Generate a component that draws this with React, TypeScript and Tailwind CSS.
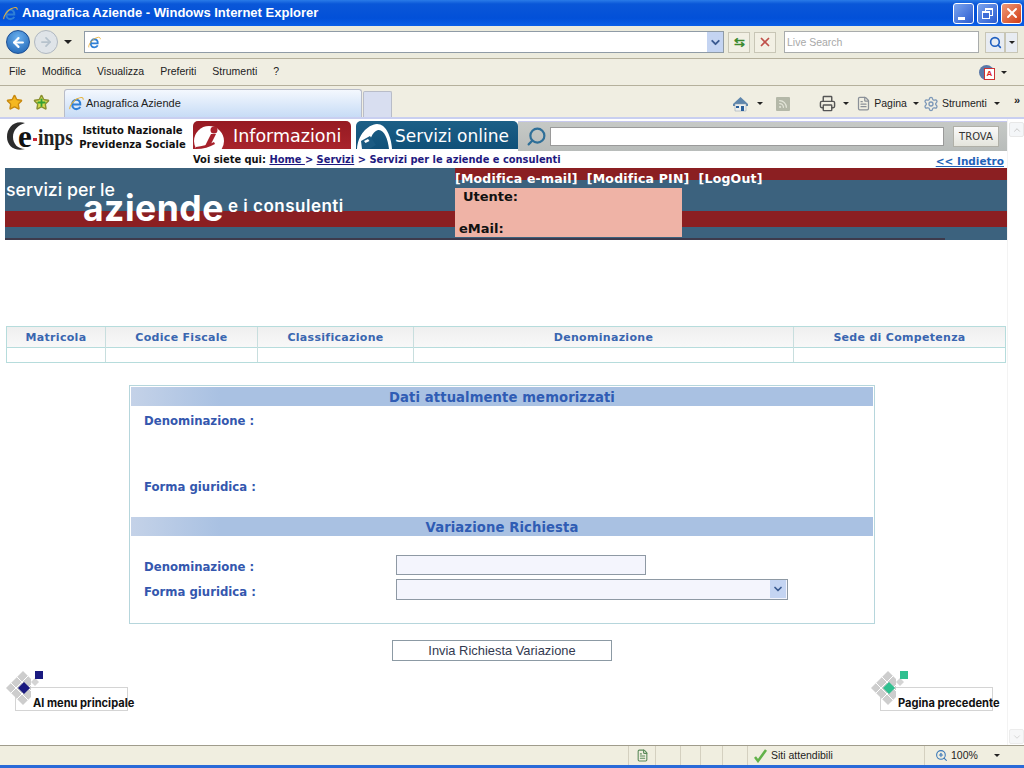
import { ArrowLeft, ArrowRight, ChevronDown, FileText, Plus, Printer, Rss, Search, Settings, Star, X, ZoomIn } from "lucide-react";

const tahoma = "font-['DejaVu_Sans',sans-serif]";
const ui = "font-['Liberation_Sans',Arial,sans-serif]";
const banner = "font-['Inter',sans-serif]";

const MENU = ["File", "Modifica", "Visualizza", "Preferiti", "Strumenti", "?"];

const COLUMNS = [
  { label: "Matricola", width: "w-[98px]" },
  { label: "Codice Fiscale", width: "w-[152px]" },
  { label: "Classificazione", width: "w-[156px]" },
  { label: "Denominazione", width: "w-[380px]" },
  { label: "Sede di Competenza", width: "flex-1" },
];

const IeLogo = ({ size = 16 }: { size?: number }) => (
  <svg width={size} height={size} viewBox="0 0 16 16" className="shrink-0">
    <path d="M4 9h8c.3-3-1.500-5-4-5S3.400 6 3.400 9s2 5 4.600 5c1.800 0 3.200-.8 4-2.400" fill="none" stroke="#2f7fd6" strokeWidth="2.200" />
    <path d="M1 14C0 12 4 4 11 2c3-1 4.500 0 4 2" fill="none" stroke="#e8b23a" strokeWidth="1.100" />
  </svg>
);

const Caret = ({ className = "" }: { className?: string }) => (
  <span className={`inline-block h-0 w-0 border-x-[3px] border-t-[3px] border-x-transparent border-t-[#222] ${className}`} />
);

// Grey tile cluster with the coloured diamond and square beside it
const NavBullet = ({ color }: { color: string }) => (
  <svg width="40" height="38" viewBox="0 0 40 38" className="absolute left-[-12px] top-[-18px]">
    <path d="M2 18L19 1l8 8v18l-8 8z" fill="#cdcdcd" />
    <path d="M31 8l4 4-4 4-4-4z" fill="#d4d4d4" />
    <path d="M7 13l17 17M13 7l14 14M7 23L24 6M13 29L27 15" stroke="#fff" strokeWidth="1" fill="none" />
    <path d="M20 12l6 6-6 6-6-6z" fill={color} />
    <rect x="31" y="1" width="8" height="8" fill={color} />
  </svg>
);

const SectionTitle = ({ children }: { children: string }) => (
  <div className={`flex h-[19px] items-center justify-center bg-[linear-gradient(90deg,#c4d2e8,#a9c1e2_12%,#a9c1e2)] pt-[2px] text-[13.200px] font-bold tracking-[0.100px] text-[#2f5cb4] ${tahoma}`}>
    {children}
  </div>
);

const FieldLabel = ({ children }: { children: string }) => (
  <span className={`text-[11.700px] font-bold text-[#3457ae] ${tahoma}`}>{children}</span>
);

export default function App() {
  return (
    <div className="flex h-[768px] w-[1024px] flex-col overflow-hidden bg-white">
      {/* window caption */}
      <div className="flex h-[26px] shrink-0 items-center bg-[linear-gradient(180deg,#2a7be8,#0a57d8_15%,#0250d8_70%,#0a5fe8)] pl-[3px] pr-[2px]">
        <IeLogo size={15} />
        <span className={`ml-[4px] flex-1 text-[13px] font-bold text-white ${ui}`}>Anagrafica Aziende - Windows Internet Explorer</span>
        <div className="flex gap-[3px]">
          <div className="flex h-[21px] w-[21px] items-end justify-center rounded-[3px] border border-white bg-[linear-gradient(135deg,#7ba4ee,#2a5bd0)] pb-[3px] pr-[4px]">
            <span className="h-[3px] w-[7px] bg-white" />
          </div>
          <div className="relative h-[21px] w-[21px] rounded-[3px] border border-white bg-[linear-gradient(135deg,#7ba4ee,#2a5bd0)]">
            <span className="absolute left-[7px] top-[4px] h-[8px] w-[8px] border border-t-2 border-white" />
            <span className="absolute left-[4px] top-[7px] h-[8px] w-[8px] border border-t-2 border-white bg-[#3f6ed8]" />
          </div>
          <div className="flex h-[21px] w-[21px] items-center justify-center rounded-[3px] border border-white bg-[linear-gradient(135deg,#ee9a78,#d23c14)]">
            <X size={16} strokeWidth={3} color="white" />
          </div>
        </div>
      </div>

      {/* address row */}
      <div className="flex h-[33px] shrink-0 items-center border-b border-[#b5b09c] bg-[#ecebdd] pl-[6px]">
        <div className="flex h-[24px] w-[24px] items-center justify-center rounded-full border border-[#1d4f94] bg-[radial-gradient(circle_at_50%_30%,#6ab0ee,#1a5fb0)]">
          <ArrowLeft size={15} strokeWidth={3.500} color="white" />
        </div>
        <div className="ml-[4px] flex h-[24px] w-[24px] items-center justify-center rounded-full border border-[#b0b8c0] bg-[#dfe4e8]">
          <ArrowRight size={14} strokeWidth={3} color="#b6c2cc" />
        </div>
        <Caret className="ml-[6px] border-x-[4px] border-t-[4px]" />
        <div className="ml-[12px] flex h-[22px] w-[640px] items-center justify-between border border-[#8f9ba6] bg-white pl-[3px]">
          <IeLogo size={13} />
          <div className="flex h-[20px] w-[16px] items-center justify-center bg-[#c4d4f2]">
            <ChevronDown size={13} strokeWidth={3.500} color="#3a5a90" />
          </div>
        </div>
        <div className="ml-[4px] flex h-[21px] w-[22px] items-center justify-center border border-[#c8c6b6] bg-[#f2f0e4]">
          <span className="text-[13px] font-bold leading-none text-[#3d8a30]">⇆</span>
        </div>
        <div className="ml-[4px] flex h-[21px] w-[22px] items-center justify-center border border-[#c8c6b6] bg-[#f2f0e4]">
          <X size={14} strokeWidth={3} color="#c0504a" />
        </div>
        <div className={`ml-[8px] flex h-[22px] w-[195px] items-center border border-[#a9acac] bg-white pl-[2px] pt-[1px] text-[10.500px] text-[#a8a8a8] ${ui}`}>Live Search</div>
        <div className="ml-[6px] flex h-[21px] w-[20px] items-center justify-center border border-[#c8c6b6] bg-[#e8ecf2]">
          <Search size={13} strokeWidth={3} color="#1f5fc0" />
        </div>
        <div className="flex h-[21px] w-[13px] items-center justify-center border border-[#c8c6b6] bg-[#e8ecf2]">
          <Caret className="border-t-[#2f4f90]" />
        </div>
      </div>

      {/* menu row */}
      <div className={`flex h-[27px] shrink-0 items-center gap-[16px] border-b border-[#b5b09c] bg-[#f0eee2] pl-[9px] pr-[17px] text-[10.500px] text-[#222] ${ui}`}>
        {MENU.map((item) => (
          <span key={item}>{item}</span>
        ))}
        <div className="ml-auto flex items-center gap-[7px]">
          <div className="relative h-[15px] w-[15px] rounded-full bg-[#5a78a8]">
            <div className="absolute left-[5px] top-[3px] h-[12px] w-[11px] border border-[#c33] bg-white text-center text-[8px] font-bold leading-[10px] text-[#d22]">A</div>
          </div>
          <Caret />
        </div>
      </div>

      {/* tabs and command bar */}
      <div className={`flex h-[33px] shrink-0 items-end border-b-2 border-[#c9cff0] bg-[#f0eee2] pl-[6px] text-[11px] text-[#222] ${ui}`}>
        <div className="mb-[6px] flex items-center gap-[10px]">
          <Star size={17} fill="#f5b820" color="#c98a10" />
          <div className="relative">
            <Star size={17} fill="#d8dc50" color="#8a9030" />
            <Plus size={11} strokeWidth={4} color="#35a035" className="absolute left-[3px] top-[3px]" />
          </div>
        </div>
        <div className="ml-[14px] flex h-[28px] w-[298px] items-center gap-[2px] rounded-t-[3px] border border-b-0 border-[#b8bcc8] bg-[linear-gradient(180deg,#f4f8fe,#c7dcf6)] pl-[4px]">
          <IeLogo size={15} />
          <span>Anagrafica Aziende</span>
        </div>
        <div className="ml-[1px] h-[26px] w-[29px] rounded-t-[2px] border border-b-0 border-[#b8bcc8] bg-[#d8def0]" />
        <div className="mb-[5px] ml-auto flex items-center pr-[4px] text-[10.500px]">
          <svg width="17" height="17" viewBox="0 0 17 17">
            <path d="M1 9l7.500-7L16 9v2H1z" fill="#5f86ac" />
            <path d="M3 9h11v7H3z" fill="#eef0ee" stroke="#8a9aa8" strokeWidth="0.500" />
            <path d="M9 11h3v5H9z" fill="#2a5f9a" />
            <path d="M4 11h3v2H4z" fill="#2a5f9a" />
          </svg>
          <Caret className="ml-[8px]" />
          <div className="ml-[13px] flex h-[14px] w-[14px] items-center justify-center rounded-[1px] bg-[#b4b8a8]">
            <Rss size={10} strokeWidth={3} color="#e4e6da" />
          </div>
          <Printer size={17} color="#555" className="ml-[29px]" />
          <Caret className="ml-[7px]" />
          <FileText size={15} color="#8a9098" className="ml-[7px]" />
          <span className="ml-[3px]">Pagina</span>
          <Caret className="ml-[6px]" />
          <Settings size={16} color="#7c98b8" className="ml-[4px]" />
          <span className="ml-[3px]">Strumenti</span>
          <Caret className="ml-[7px]" />
          <span className="mb-[6px] ml-[14px] text-[11px] font-bold leading-none">»</span>
        </div>
      </div>

      {/* page */}
      <div className="relative flex min-h-0 flex-1 flex-col bg-white pr-[17px]">
        {/* scrollbar */}
        <div className="absolute bottom-0 right-0 top-0 w-[17px] border-l border-[#f3f3f3]">
          <div className="absolute left-[1px] top-[3px] flex h-[15px] w-[15px] items-center justify-center rounded-[2px] border border-[#e8e8e8] bg-[#f4f6f8]">
            <ChevronDown size={10} color="#c0c0c0" className="rotate-180" />
          </div>
          <div className="absolute bottom-[1px] left-[1px] flex h-[15px] w-[15px] items-center justify-center rounded-[2px] border border-[#ececec] bg-[#f6f7f8]">
            <ChevronDown size={10} color="#d0d0d0" />
          </div>
        </div>

        {/* site header */}
        <div className="mt-[2px] flex h-[31px] shrink-0 items-start">
          <div className="relative ml-[6px] flex h-[31px] w-[73px] items-center">
            <svg width="22" height="31" viewBox="0 0 22 31" className="absolute left-0 top-0">
              <path d="M19 2C8-1 1 7 1 16c0 9 8 15 18 12-7 0-12-5-12-12S12 4 19 2z" fill="#2c2c2c" />
            </svg>
            <span className="ml-[12px] font-['Liberation_Serif',serif] text-[31px] font-bold leading-none text-[#111]">e</span>
            <span className="ml-[1px] mt-[6px] h-[3px] w-[7px] bg-[#c8283a]" />
            <span className="ml-[1px] mt-[2px] origin-left scale-x-[0.85] font-['Liberation_Serif',serif] text-[23px] font-bold leading-none text-[#222]">inps</span>
          </div>
          <div className={`mr-[7px] mt-[3px] w-[107px] whitespace-nowrap text-center text-[10px] font-bold leading-[14px] text-[#111] ${tahoma}`}>
            Istituto Nazionale
            <br />
            Previdenza Sociale
          </div>
          <div className="flex h-[28px] w-[158px] items-center overflow-hidden rounded-t-[5px] bg-[linear-gradient(180deg,#961a22,#a8242c)]">
            <svg width="38" height="28" viewBox="0 0 38 28" className="shrink-0">
              <circle cx="16" cy="20" r="15" fill="#fff" />
              <circle cx="21" cy="9" r="3.500" fill="#a8222c" />
              <path d="M18 13h5l-6 12h-5z" fill="#a8222c" />
              <path d="M3 26c6-1 12-2 18-5l1 2c-5 3-12 5-19 5z" fill="#a8222c" />
            </svg>
            <span className={`ml-[2px] mt-[4px] text-[17.500px] leading-none text-white ${tahoma}`}>Informazioni</span>
          </div>
          <div className="ml-[5px] flex h-[28px] w-[162px] items-center overflow-hidden rounded-t-[5px] bg-[linear-gradient(180deg,#1c5f86,#105078)]">
            <svg width="37" height="28" viewBox="0 0 37 28" className="shrink-0">
              <path d="M1 28C2 14 11 4 21 3c9 0 14 12 15 25h-3c-1-10-5-20-11-19-6 2-9 10-9 19z" fill="#fff" />
              <path d="M2 28C3 20 9 10 17 7c-3 6-4 12-4 21z" fill="#fff" />
              <path d="M5 20l9-5 6 9-7 4H6z" fill="#1a5a82" />
              <path d="M8 20l4-2 1.500 2-4 2z" fill="#fff" />
            </svg>
            <span className={`ml-[2px] mt-[3px] text-[17px] leading-none text-white ${tahoma}`}>Servizi online</span>
          </div>
          <div className="flex h-[30px] flex-1 items-center border-t border-[#c6c8ee] bg-[linear-gradient(180deg,#c6c9c6,#b8bcba)] pl-[8px]">
            <div className="flex h-[20px] w-[24px] shrink-0 items-center">
              <Search size={21} strokeWidth={2.500} color="#2f6f98" className="-scale-x-100" />
            </div>
            <div className="h-[19px] w-[394px] border border-[#9a9a9a] bg-white" />
            <div className={`ml-[9px] flex h-[21px] w-[46px] items-center justify-center border border-[#b0b0a8] bg-[linear-gradient(180deg,#fafafa,#e4e4dc)] text-[10px] text-[#333] ${tahoma}`}>TROVA</div>
          </div>
        </div>

        {/* breadcrumb */}
        <div className={`ml-[193px] mt-[1px] flex h-[15px] shrink-0 items-start justify-between text-[9.900px] font-bold leading-[13px] text-[#1f1a80] ${tahoma}`}>
          <span>
            <span className="text-[#111]">Voi siete qui: </span>
            <span className="underline">Home </span>
            &gt; <span className="underline">Servizi</span> &gt; Servizi per le aziende e consulenti
          </span>
          <span className="mr-[3px] translate-y-[2px] text-[10.500px] text-[#1f62b8] underline">&lt;&lt; Indietro</span>
        </div>

        {/* service banner */}
        <div className="ml-[5px] flex h-[70px] shrink-0 bg-[linear-gradient(180deg,#3c627e_0,#3c627e_43px,#8b1f22_43px,#8b1f22_59px,#3c627e_59px)]">
          <div className={`relative w-[450px] shrink-0 text-white ${banner}`}>
            <span className="absolute left-[1px] top-[15px] text-[17.800px] font-medium leading-[14px]">servizi per le</span>
            <span className="absolute left-[78px] top-[31px] text-[35.500px] font-bold leading-[19px] tracking-[0.500px]">aziende</span>
            <span className="absolute left-[223px] top-[26px] text-[17px] font-semibold tracking-[0.500px]">e i consulenti</span>
          </div>
          <div className="flex-1 bg-[linear-gradient(180deg,#8b1f22_0,#8b1f22_12px,#3c627e_12px,#3c627e_43px,#8b1f22_43px,#8b1f22_59px,#3c627e_59px)]">
            <div className={`h-[20px] text-[12.500px] font-bold leading-[21px] tracking-[0.200px] text-white ${tahoma}`}>
              [Modifica e-mail]&nbsp; [Modifica PIN]&nbsp; [LogOut]
            </div>
            <div className={`flex h-[49px] w-[227px] flex-col justify-between bg-[#efb3a6] pb-[1px] pt-[2px] text-[13px] font-bold leading-[14px] text-[#111] ${tahoma}`}>
              <span className="ml-[8px]">Utente:</span>
              <span className="ml-[4px]">eMail:</span>
            </div>
          </div>
        </div>
        <div className="ml-[5px] h-[2px] shrink-0 bg-[#3c627e]">
          <div className="h-full w-[940px] bg-[#3d3a4c]" />
        </div>

        {/* selected company table */}
        <div className="ml-[6px] mr-[1px] mt-[86px] flex shrink-0 border border-[#b6dcdc]">
          {COLUMNS.map((col, i) => (
            <div key={col.label} className={`${col.width} flex flex-col ${i > 0 ? "border-l border-[#c8dede]" : ""}`}>
              <div className={`flex h-[21px] items-center justify-center border-b border-[#b6dcdc] bg-[linear-gradient(180deg,#efefef,#f8f8f8)] pt-[2px] text-[11px] font-bold tracking-[0.300px] text-[#3a66b0] ${tahoma}`}>
                {col.label}
              </div>
              <div className="h-[14px]" />
            </div>
          ))}
        </div>

        {/* company data form */}
        <div className="ml-[129px] mt-[22px] flex h-[239px] w-[746px] shrink-0 flex-col border border-[#b6d6dc] px-[1px] pt-[1px]">
          <SectionTitle>Dati attualmente memorizzati</SectionTitle>
          <div className="ml-[13px] mt-[1px] h-[66px]">
            <FieldLabel>Denominazione :</FieldLabel>
          </div>
          <div className="ml-[13px] h-[44px]">
            <FieldLabel>Forma giuridica :</FieldLabel>
          </div>
          <SectionTitle>Variazione Richiesta</SectionTitle>
          <div className="ml-[13px] mt-[18px] flex h-[21px] items-center">
            <div className="w-[252px]">
              <FieldLabel>Denominazione :</FieldLabel>
            </div>
            <div className="h-[20px] w-[250px] border border-[#8e99a4] bg-[#f4f5fd]" />
          </div>
          <div className="ml-[13px] mt-[3px] flex h-[22px] items-center">
            <div className="w-[252px] translate-y-[1px]">
              <FieldLabel>Forma giuridica :</FieldLabel>
            </div>
            <div className="flex h-[21px] w-[392px] items-center justify-end border border-[#8e99a4] bg-[#f4f5fd] pr-[1px]">
              <div className="flex h-[18px] w-[16px] items-center justify-center bg-[#c4d4f2]">
                <ChevronDown size={12} strokeWidth={3.500} color="#3a5a90" />
              </div>
            </div>
          </div>
        </div>

        <div className={`ml-[392px] mt-[16px] flex h-[21px] w-[220px] shrink-0 items-center justify-center border border-[#8c9aa4] text-[12.900px] text-[#333a50] ${ui}`}>
          Invia Richiesta Variazione
        </div>

        {/* bottom navigation */}
        <div className={`mt-[26px] flex shrink-0 justify-between pl-[15px] pr-[14px] text-[11.100px] font-bold text-[#111] ${banner}`}>
          <div className="relative h-[24px] w-[113px] whitespace-nowrap border border-[#d4d4d4]">
            <NavBullet color="#1a1a80" />
            <span className="absolute left-[17px] top-[7px]">Al menu principale</span>
          </div>
          <div className="relative h-[24px] w-[113px] whitespace-nowrap border border-[#d4d4d4]">
            <NavBullet color="#30c090" />
            <span className="absolute left-[17px] top-[7px]">Pagina precedente</span>
          </div>
        </div>
      </div>

      {/* status bar */}
      <div className={`flex h-[20px] shrink-0 items-center border-t border-[#a09c8c] bg-[#f0eee0] text-[10.500px] text-[#222] ${ui}`}>
        <div className="h-full flex-1" />
        <div className="flex h-full w-[27px] items-center justify-center border-l border-[#d4d0c0]">
          <FileText size={13} color="#5a8a5a" />
        </div>
        <div className="h-full w-[25px] border-l border-[#d4d0c0]" />
        <div className="h-full w-[20px] border-l border-[#d4d0c0]" />
        <div className="h-full w-[22px] border-l border-[#d4d0c0]" />
        <div className="h-full w-[25px] border-l border-[#d4d0c0]" />
        <div className="flex h-full w-[177px] items-center border-l border-[#d4d0c0] pl-[5px]">
          <svg width="15" height="14" viewBox="0 0 15 14" className="mr-[3px]">
            <path d="M2 8l3 4 8-11" fill="none" stroke="#62b24a" strokeWidth="2.500" />
          </svg>
          Siti attendibili
        </div>
        <div className="flex h-full w-[84px] items-center border-l border-[#d4d0c0] pl-[10px]">
          <ZoomIn size={13} color="#3a78b8" />
          <span className="ml-[3px]">100%</span>
          <Caret className="ml-[16px]" />
        </div>
        <div className="h-full w-[16px]" />
      </div>
      <div className="h-[3px] shrink-0 bg-[#2a6ad8]" />
    </div>
  );
}
